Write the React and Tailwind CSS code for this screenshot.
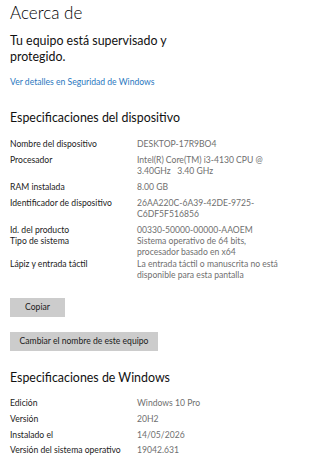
import React from 'react'

const FONT = { fontFamily: 'Lato, "Noto Sans", sans-serif' }

const DEVICE = [
  ['Nombre del dispositivo', ['DESKTOP-17R9BO4'], 'mt-[11px]'],
  ['Procesador', ['Intel(R) Core(TM) i3-4130 CPU @', '3.40GHz   3.40 GHz'], 'mt-[5px]'],
  ['RAM instalada', ['8.00 GB'], 'mt-[5px]'],
  ['Identificador de dispositivo', ['26AA220C-6A39-42DE-9725-', 'C6DF5F516856'], 'mt-[5px]'],
  ['Id. del producto', ['00330-50000-00000-AAOEM'], 'mt-[5px]'],
  ['Tipo de sistema', ['Sistema operativo de 64 bits,', 'procesador basado en x64'], 'mt-0'],
  ['Lápiz y entrada táctil', ['La entrada táctil o manuscrita no está', 'disponible para esta pantalla'], 'mt-px'],
]

const WINDOWS = [
  ['Edición', 'Windows 10 Pro', 'mt-[10px]'],
  ['Versión', '20H2', 'mt-[5px]'],
  ['Instalado el', '14/05/2026', 'mt-[5px]'],
  ['Versión del sistema operativo', '19042.631', 'mt-[4px]'],
]

const Row = ({ label, lines, className }) => (
  <div className={`flex text-[8.6px] leading-[11px] ${className}`}>
    <div className="w-[127px] shrink-0 text-[#1b1b1b] whitespace-nowrap">{label}</div>
    <div className="text-[#6f6f6f] whitespace-pre">
      {lines.map(l => <div key={l}>{l}</div>)}
    </div>
  </div>
)

export default function App() {
  return (
    <div className="w-[320px] h-[458px] overflow-hidden bg-white px-[10px]" style={FONT}>
      <h1 className="text-[17px] leading-[26px] font-light text-black">Acerca de</h1>
      <p className="mt-[7px] text-[12.4px] leading-[16px] text-[#111]">
        Tu equipo está supervisado y<br />protegido.
      </p>
      <a className="block mt-[11px] text-[8.6px] leading-[12px] text-[#2a78c0]">Ver detalles en Seguridad de Windows</a>

      {/* Especificaciones del dispositivo */}
      <h2 className="mt-[20px] text-[12.4px] leading-[20px] text-[#111]">Especificaciones del dispositivo</h2>
      {DEVICE.map(([label, lines, mt]) => (
        <Row key={label} label={label} lines={lines} className={mt} />
      ))}

      <button className="block mt-[17px] w-[55px] h-[19px] bg-[#cccccc] text-[8.6px] text-[#1b1b1b]">Copiar</button>
      <button className="block mt-[15px] w-[148px] h-[19px] bg-[#cccccc] text-[8.6px] text-[#1b1b1b]">Cambiar el nombre de este equipo</button>

      {/* Especificaciones de Windows */}
      <h2 className="mt-[17px] text-[12.4px] leading-[20px] text-[#111]">Especificaciones de Windows</h2>
      {WINDOWS.map(([label, value, mt]) => (
        <Row key={label} label={label} lines={[value]} className={mt} />
      ))}
    </div>
  )
}
